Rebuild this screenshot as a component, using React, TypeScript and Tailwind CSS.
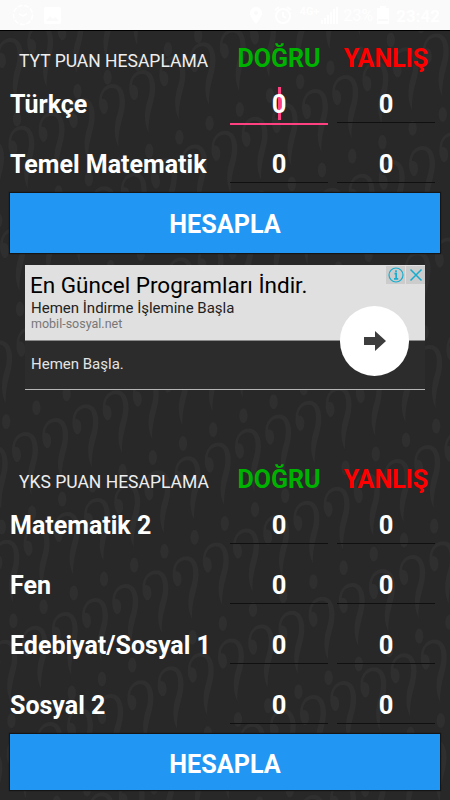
import React from "react";

type Field = { label: string; focused?: boolean };

const tytFields: Field[] = [
  { label: "Türkçe", focused: true },
  { label: "Temel Matematik" },
];

const yksFields: Field[] = [
  { label: "Matematik 2" },
  { label: "Fen" },
  { label: "Edebiyat/Sosyal 1" },
  { label: "Sosyal 2" },
];

// one point on each diagonal row of question marks
const diagonals = [
  [10, 37],
  [112, 83],
  [315, 88],
  [422, 145],
  [25, 431],
  [97, 497],
  [95, 597],
  [80, 707],
  [313, 694],
  [343, 780],
  [403, 853],
];

const Pattern = () => {
  const marks: number[][] = [];
  diagonals.forEach(([x, y]) => {
    for (let i = -16; i <= 16; i++) {
      const mx = x + i * 30.2;
      const my = y - i * 13.9;
      if (mx > -20 && mx < 470 && my > -90 && my < 800) marks.push([mx, my]);
    }
  });
  return (
    <svg className="absolute inset-0" width="450" height="770" viewBox="0 30 450 770">
      <defs>
        <g id="mark" fill="#2f2f2f">
          <path d="M-13 18C-13 7-7 0 1 0C9 0 13 8 13 18C13 32 6 42 6.500 63C2 54 2 44 4 35C6 28 7.500 24 7.500 17C7.500 8 5 4 0 4C-6 4-10 9-10 15C-6 14-4 18-4 23C-4 29-8 32-10 29C-13 25-13 21-13 18Z" />
          <ellipse cx="7" cy="81" rx="4.200" ry="7.500" />
        </g>
      </defs>
      {marks.map(([x, y], i) => (
        <use key={i} href="#mark" x={x} y={y} />
      ))}
    </svg>
  );
};

const StatusBar = () => (
  <div className="flex h-[30px] items-center bg-[#fafafa] pl-3 pr-[10px] text-white">
    <svg width="22" height="22" viewBox="0 0 22 22" fill="none" stroke="currentColor" strokeWidth="1.5">
      <circle cx="11" cy="11" r="9.5" strokeDasharray="5 1.5" />
      <path d="M7 10l4 2 4-2" />
    </svg>
    <svg className="ml-[10px]" width="17" height="17" viewBox="0 0 17 17">
      <rect width="17" height="17" rx="2" fill="currentColor" />
      <path d="M2 14l4-5 3 3 2-2 4 4z" fill="#fafafa" />
    </svg>
    <div className="flex-1" />
    <svg width="12" height="17" viewBox="0 0 12 17" fill="currentColor">
      <path fillRule="evenodd" d="M6 0a6 6 0 0 1 6 6c0 4-6 11-6 11S0 10 0 6a6 6 0 0 1 6-6zm0 4a2 2 0 1 0 0 4 2 2 0 0 0 0-4z" />
    </svg>
    <svg className="ml-3" width="18" height="18" viewBox="0 0 18 18" fill="none" stroke="currentColor" strokeWidth="2">
      <circle cx="9" cy="10" r="7" />
      <path d="M9 6v4l3 2M1 4l4-3M17 4l-4-3" />
    </svg>
    <span className="ml-2 -mt-2 text-[11px] leading-none font-bold">4G+</span>
    <svg className="ml-[2px]" width="17" height="17" viewBox="0 0 17 17" fill="currentColor">
      <path d="M0 13h2v4H0zM3 11h2v6H3zM6 8h2v9H6zM9 5h2v12H9zM12 2h2v15h-2zM15 0h2v17h-2z" />
    </svg>
    <span className="ml-[5px] pt-[2px] text-[16px] leading-none">23%</span>
    <svg className="ml-1" width="12" height="18" viewBox="0 0 12 18">
      <path d="M3 0h6v2h3v16H0V2h3z" fill="currentColor" />
      <path d="M1 14h10" stroke="#f4f4f4" />
    </svg>
    <span className="ml-[7px] pt-[2px] text-[17px] leading-none font-bold">23:42</span>
  </div>
);

const Header = ({ title }: { title: string }) => (
  <div className="flex h-11 items-center pt-[13px]">
    <div className="w-[210px] pl-[9px] pt-[5px] text-[17.5px] leading-none whitespace-nowrap text-[#eeeeee]">
      {title}
    </div>
    <div className="ml-[10px] w-[98px] pb-[3px] text-center text-[25px] leading-none font-bold text-[#00b200]">
      DOĞRU
    </div>
    <div className="ml-[9px] w-[98px] pb-[3px] text-center text-[25px] leading-none font-bold text-[#ff0000]">
      YANLIŞ
    </div>
  </div>
);

const NumberInput = ({ focused }: { focused?: boolean }) => (
  <div className="relative flex h-[60px] w-[98px] items-center justify-center">
    {focused && <span className="absolute top-3 left-[48px] h-[33px] w-[3px] bg-[#ff4081]" />}
    <span className="relative text-[25.5px] leading-none font-bold">0</span>
    {focused ? (
      <span className="absolute bottom-[10px] left-0 h-[2px] w-[98px] bg-[#ff4081]" />
    ) : (
      <span className="absolute bottom-[12px] left-0 h-px w-[98px] bg-[#101010]" />
    )}
  </div>
);

const Row = ({ label, focused }: Field) => (
  <div className="flex h-[60px] items-center">
    <div className="w-[220px] pb-[2px] text-[25px] leading-none font-bold whitespace-nowrap">{label}</div>
    <NumberInput focused={focused} />
    <div className="ml-[9px]">
      <NumberInput />
    </div>
  </div>
);

const AdBanner = () => (
  <div className="relative mx-[15px] mt-3 h-[125px] border-b border-[#b5b5b5] bg-[#2c2c2c]">
    <div className="h-[76px] border-b border-[#8a8a8a] bg-[#e0e0e0] pl-[5px] pt-[8px]">
      <div className="text-[22.5px] leading-[25px] whitespace-nowrap text-black">En Güncel Programları İndir.</div>
      <div className="pl-[1px] pt-[2px] text-[15px] leading-[17px] text-[#222222]">Hemen İndirme İşlemine Başla</div>
      <div className="-mt-px pl-[1px] text-[12.5px] leading-[15px] text-[#777777]">mobil-sosyal.net</div>
    </div>
    <div className="pl-[6px] pt-[14px] text-[15px] leading-[18px] text-[#e4e4e4]">Hemen Başla.</div>
    <div className="absolute top-[1px] right-0 flex gap-px">
      <div className="flex h-[18px] w-[19px] items-center justify-center bg-[#cccccc]">
        <svg width="16" height="16" viewBox="0 0 16 16" fill="none" stroke="#16adce">
          <circle cx="8" cy="8" r="7" strokeWidth="1.2" />
          <path d="M6.5 6.7h1.7v5M6 11.8h4.2M8 3.3v2" strokeWidth="1.7" />
        </svg>
      </div>
      <div className="flex h-[18px] w-[19px] items-center justify-center bg-[#cccccc]">
        <svg width="14" height="14" viewBox="0 0 14 14" stroke="#16adce" strokeWidth="1.5">
          <path d="M1.5 1.5l11 11M12.5 1.5l-11 11" />
        </svg>
      </div>
    </div>
    <div className="absolute top-[41px] left-[315px] flex h-[70px] w-[69px] items-center justify-center rounded-full bg-white">
      <svg width="22" height="20" viewBox="0 0 22 20">
        <path d="M0 6h11V0l11 10-11 10v-6H0z" fill="#3d3d3d" />
      </svg>
    </div>
  </div>
);

const App = () => {
  return (
    <div className="h-[800px] w-[450px] overflow-hidden bg-[#282828] font-['Roboto',sans-serif] text-white">
      <StatusBar />
      <div className="relative h-[770px] overflow-hidden border-t border-black">
        <Pattern />
        <div className="relative flex flex-col px-[10px]">
          <Header title="TYT PUAN HESAPLAMA" />
          {tytFields.map((field) => (
            <Row key={field.label} {...field} />
          ))}
          <button className="-mt-[2px] h-[60px] bg-[#2196f3] pt-[3px] text-[25.2px] leading-none font-bold shadow-[0_0_1px_1px_#151515]">
            HESAPLA
          </button>
          <AdBanner />
          <div className="h-[62px]" />
          <Header title="YKS PUAN HESAPLAMA" />
          {yksFields.map((field) => (
            <Row key={field.label} {...field} />
          ))}
          <button className="-mt-[2px] h-[56px] bg-[#2196f3] pt-[6px] text-[25.2px] leading-none font-bold shadow-[0_0_1px_1px_#151515]">
            HESAPLA
          </button>
        </div>
      </div>
    </div>
  );
};

export default App;
